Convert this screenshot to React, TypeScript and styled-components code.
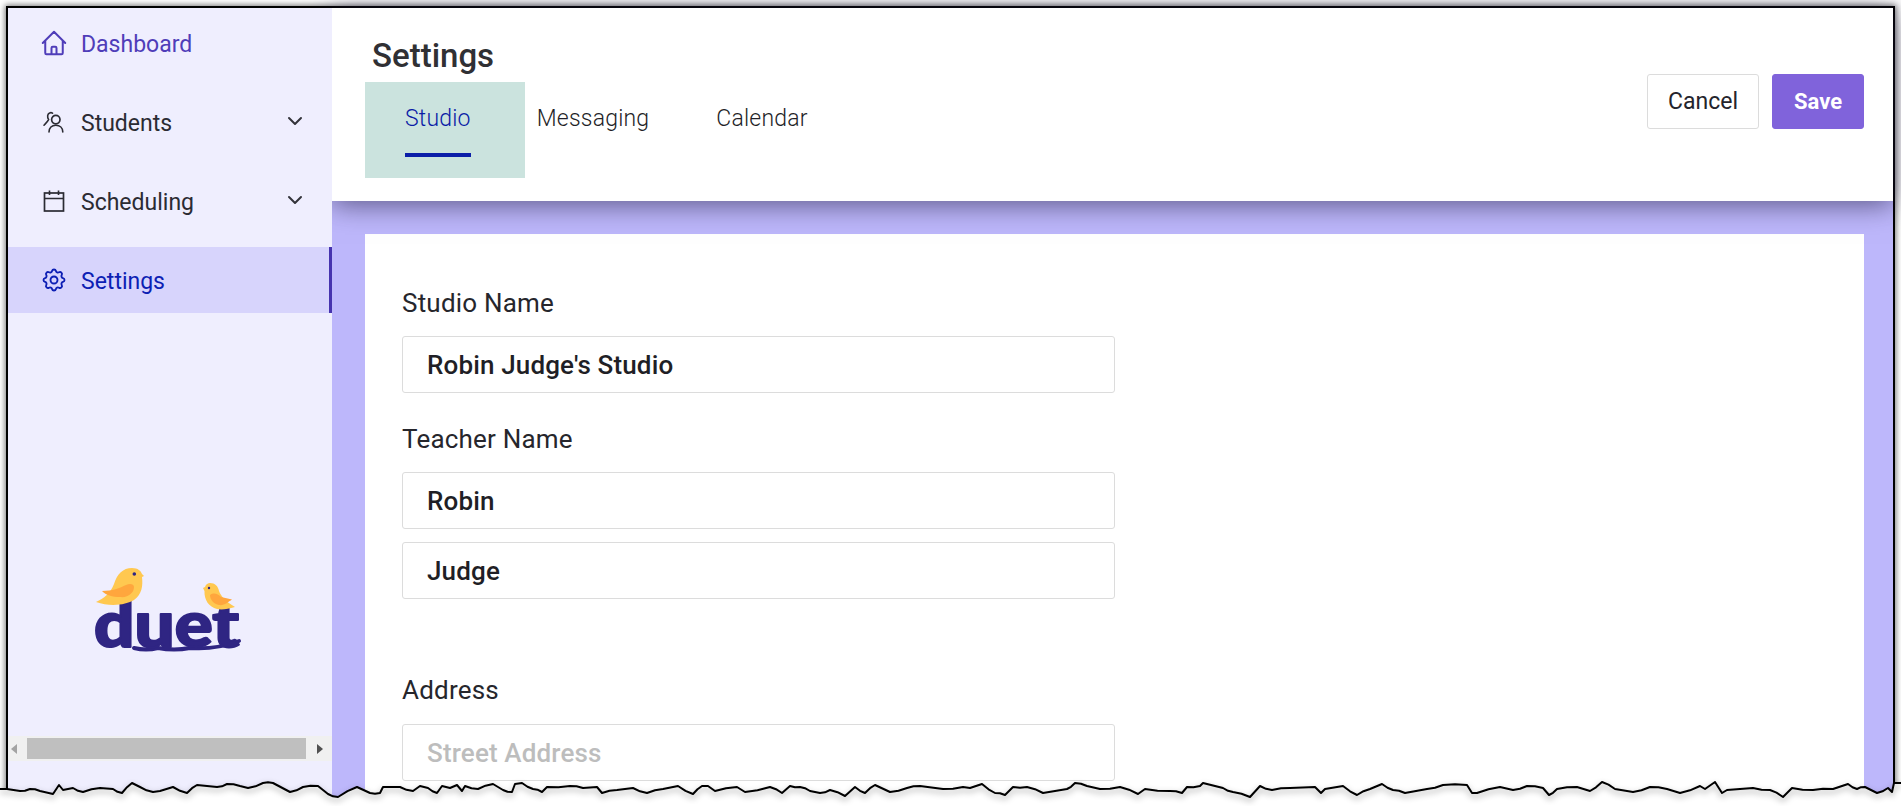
import React from 'react';
import styled, { createGlobalStyle } from 'styled-components';
import { HiOutlineHome, HiOutlineCog } from 'react-icons/hi';
import { ChevronDown } from 'lucide-react';

const Global = createGlobalStyle`
  html, body { margin: 0; padding: 0; background: #fff; height: 806px; overflow: hidden; }
  #root { height: 806px; }
  * { box-sizing: border-box; }
`;

const Page = styled.div`
  position: relative;
  width: 1901px;
  height: 806px;
  overflow: hidden;
  padding: 6px 6px 0;
  font-family: Roboto, "Liberation Sans", sans-serif;
  color: #2b2b33;
`;

const Frame = styled.div`
  display: flex;
  width: 1889px;
  height: 830px;
  border: 2px solid #000;
  box-shadow: 0 0 6px 1px rgba(0, 0, 0, 0.55);
`;

const Sidebar = styled.aside`
  position: relative;
  z-index: 2;
  flex: 0 0 324px;
  display: flex;
  flex-direction: column;
  background: #efeefe;
  padding-top: 2px;
`;

const Nav = styled.nav`
  display: flex;
  flex-direction: column;
  gap: 13px;
`;

const NavItem = styled.div<{ $tone: 'brand' | 'plain' | 'active' }>`
  height: 66px;
  display: flex;
  align-items: center;
  gap: 14px;
  padding: 0 25px 0 33px;
  font-size: 23px;
  color: ${p => (p.$tone === 'brand' ? '#4f3db9' : p.$tone === 'active' ? '#0d1fb4' : '#2b2b33')};
  background: ${p => (p.$tone === 'active' ? '#d7d4fc' : 'transparent')};
  border-right: ${p => (p.$tone === 'active' ? '3px solid #4633af' : '0')};
`;

const NavIcon = styled.span`
  width: 26px;
  height: 26px;
  display: flex;
  align-items: center;
  justify-content: center;
  svg { display: block; flex: none; }
  svg path { stroke-width: 1.6; }
`;

const NavLabel = styled.span`
  flex: 1;
  padding-top: 2px;
`;

const Chevron = styled(ChevronDown)`
  width: 24px;
  height: 24px;
  margin-top: -2px;
  color: #33333a;
`;

const LogoWrap = styled.div`
  margin: 247px 0 0 82px;
  height: 104px;
`;

const ScrollBar = styled.div`
  margin-top: 72px;
  height: 25px;
  display: flex;
  align-items: center;
  justify-content: space-between;
  background: #f0f0f0;
  padding: 0 9px 0 3px;
`;

const ScrollThumb = styled.div`
  width: 279px;
  height: 21px;
  margin-left: -1px;
  background: #bfbfbf;
`;

const Arrow = styled.span<{ $dir: 'left' | 'right' }>`
  width: 0;
  height: 0;
  border-top: 5px solid transparent;
  border-bottom: 5px solid transparent;
  ${p =>
    p.$dir === 'left'
      ? 'border-right: 6px solid #a3a3a3; margin-right: 10px;'
      : 'border-left: 6px solid #505050; margin-left: 10px;'}
`;

const Content = styled.div`
  flex: 1;
  display: flex;
  flex-direction: column;
  background: #bdb7fb;
  min-width: 0;
`;

const Header = styled.header`
  position: relative;
  z-index: 1;
  flex: 0 0 193px;
  background: #fff;
  display: flex;
  justify-content: space-between;
  padding: 0 29px 0 33px;
  box-shadow: 0 4px 26px rgba(30, 25, 60, 0.6);
`;

const HeaderLeft = styled.div`
  display: flex;
  flex-direction: column;
`;

const Title = styled.h1`
  margin: 0;
  padding: 28px 0 0 7px;
  height: 74px;
  font-size: 33px;
  line-height: 40px;
  font-weight: 500;
  color: #303034;
`;

const Tabs = styled.div`
  display: flex;
  align-items: stretch;
  height: 96px;
`;

const Tab = styled.div<{ $active?: boolean }>`
  font-size: 23px;
  font-weight: 300;
  letter-spacing: 0.2px;
  color: ${p => (p.$active ? '#0a1ca6' : '#1f1f28')};
  background: ${p => (p.$active ? '#cbe3de' : 'transparent')};
  padding: ${p => (p.$active ? '0 54px 0 40px' : '0')};
  margin-right: ${p => (p.$active ? '12px' : '67px')};
`;

const TabText = styled.div<{ $active?: boolean }>`
  height: 75px;
  padding-top: 24px;
  line-height: 26px;
  border-bottom: 4px solid ${p => (p.$active ? '#0b1ea8' : 'transparent')};
`;

const Actions = styled.div`
  display: flex;
  gap: 13px;
  padding-top: 66px;
`;

const Button = styled.button<{ $primary?: boolean }>`
  height: 55px;
  width: ${p => (p.$primary ? '92px' : '112px')};
  border-radius: 3px;
  border: 1px solid ${p => (p.$primary ? '#8063db' : '#dcdcdc')};
  background: ${p => (p.$primary ? '#8063db' : '#fff')};
  color: ${p => (p.$primary ? '#fff' : '#24242c')};
  font-family: inherit;
  font-size: ${p => (p.$primary ? '22px' : '23px')};
  font-weight: ${p => (p.$primary ? 700 : 400)};
  padding: 0;
`;

const Body = styled.main`
  flex: 1;
  padding: 33px 29px 0 33px;
`;

const Card = styled.section`
  height: 700px;
  background: #fff;
  padding: 54px 0 0 37px;
`;

const Label = styled.label<{ $gap?: number }>`
  display: block;
  margin-top: ${p => p.$gap ?? 0}px;
  height: 30px;
  line-height: 30px;
  font-size: 26px;
  letter-spacing: 0.2px;
  color: #26262c;
`;

const Field = styled.input<{ $gap: number }>`
  display: block;
  width: 713px;
  height: 57px;
  margin-top: ${p => p.$gap}px;
  padding: 0 24px;
  border: 1px solid #dcdcdc;
  border-radius: 3px;
  font-family: Roboto, sans-serif;
  font-size: 26px;
  font-weight: 500;
  letter-spacing: 0.15px;
  color: #1f1f26;
  background: #fff;
  outline: none;
  &::placeholder { color: #bdbdbd; opacity: 1; }
`;

const TornEdge = styled.svg`
  position: absolute;
  z-index: 5;
  left: 0;
  top: 0;
  pointer-events: none;
`;

const EdgeLine = styled.path`
  fill: none;
  stroke: #000;
  stroke-width: 2;
  stroke-linejoin: round;
  filter: drop-shadow(0 3px 3px rgba(0, 0, 0, 0.4));
`;

const rawEdge: [number, number][] = [
  [0,789],[7,789],[20,791],[30,789],[40,791],[53,794],[59,785],[63,790],[73,788],[83,792],[100,788],[113,789],[122,793],[132,783],[140,787],[153,792],[160,791],[173,787],[187,793],[197,785],[217,787],[227,784],[240,786],[248,788],[263,783],[273,783],[290,792],[303,787],[318,786],[328,794],[338,797],[357,787],[370,793],[380,793],[383,787],
  [400,787],[413,791],[420,786],[428,788],[437,793],[442,786],[450,788],[457,785],[462,791],[465,786],[478,789],[493,784],[503,790],[512,792],[515,784],[522,783],[533,789],[542,792],[547,787],[570,786],[583,788],[597,787],[602,793],[617,790],[633,788],[647,793],[663,789],[678,786],[693,794],[702,786],[708,786],[715,791],[737,787],[745,792],[770,787],[782,793],[790,786],
  [800,787],[810,791],[820,793],[830,790],[845,796],[855,787],[865,793],[875,785],[890,792],[907,788],[920,786],[943,789],[963,787],[970,788],[982,784],[995,793],[1005,795],[1013,787],[1027,787],[1043,793],[1067,789],[1075,783],[1087,786],[1100,789],[1120,787],[1138,794],[1145,789],[1170,791],[1182,793],[1187,787],
  [1200,786],[1203,783],[1223,788],[1233,792],[1250,797],[1260,786],[1272,790],[1290,788],[1315,787],[1321,793],[1325,789],[1343,786],[1357,795],[1370,789],[1382,784],[1393,790],[1405,793],[1427,789],[1443,785],[1467,785],[1472,793],[1477,793],
  [1500,787],[1513,790],[1527,786],[1543,788],[1549,795],[1557,789],[1577,787],[1590,791],[1602,782],[1615,789],[1633,792],[1650,787],[1667,789],[1680,793],[1700,786],[1705,789],[1715,782],[1722,793],[1727,790],[1753,788],[1770,790],[1783,797],[1792,788],[1813,790],[1833,789],[1848,784],[1857,789],[1865,787],[1877,793],[1888,788],[1892,792],[1894,783],[1901,783],
];

const edge = rawEdge.flatMap(([x, y], i) => {
  const next = rawEdge[i + 1];
  if (!next || next[0] - x < 8) return [[x, y]];
  const jitter = ((i * 7) % 3) - 1;
  return [[x, y], [(x + next[0]) / 2, (y + next[1]) / 2 + jitter * 0.8]];
});
const edgeD = 'M' + edge.map(p => p.join(',')).join(' L');

function Logo() {
  return (
    <svg width="160" height="104" viewBox="0 0 160 104" overflow="visible" aria-label="duet logo">
      <path d="M44 88 Q56 91 68 88 Q84 91 100 88 Q125 90 149 81" fill="none" stroke="#2f2583" strokeWidth="4" strokeLinecap="round" />
      <text
        x="4"
        y="87"
        fontFamily="Lato, sans-serif"
        fontWeight="900"
        fontSize="62"
        textLength="145"
        lengthAdjust="spacingAndGlyphs"
        fill="#2f2583"
        stroke="#2f2583"
        strokeWidth="2"
        strokeLinejoin="round"
      >
        duet
      </text>
      <path d="M6 42C14 38 20 34 24 24C27 14 33 8 42 8C48 8 51 11 52 14L54 16L52 17C53 26 52 34 44 40C36 45 20 47 6 42Z" fill="#ffc850" />
      <path d="M12 31C22 31 30 28 36 25C40 23 44 24 44 27C44 33 38 38 30 37C22 37 16 35 12 31Z" fill="#ffa63d" />
      <circle cx="44.3" cy="14" r="1.8" fill="#2f2583" />
      <path d="M113 28L115 27C116 24 118 23 120 23C125 23 128 26 129 31C131 36 135 41 145 47C138 49 132 50 127 49C119 47 114 40 114.5 31Z" fill="#ffc850" />
      <path d="M120 35C124 32 128 34 131 37L142 39.5C138 42 134 46 129 45C124 44 120 40 120 35Z" fill="#ffa63d" />
      <circle cx="119" cy="28" r="1.2" fill="#2f2583" />
    </svg>
  );
}

function StudentsIcon() {
  return (
    <svg width="24" height="24" viewBox="0 0 24 24" fill="none" stroke="currentColor" strokeWidth="1.7" strokeLinecap="round">
      <circle cx="13.8" cy="9.6" r="4.2" />
      <path d="M7 22c0-4.2 2.8-6.8 6.8-6.8s7 2.6 7 6.8" />
      <path d="M10.5 3.2C9.6 2.6 8.6 2.5 7.6 3 5.4 4 5 6.8 6.6 9.6 5 12.5 3.6 13.5 2 15.2" />
    </svg>
  );
}

function CalendarIcon() {
  return (
    <svg width="24" height="24" viewBox="0 0 24 24" fill="none" stroke="currentColor" strokeWidth="1.7">
      <rect x="2.5" y="4" width="19" height="18" />
      <path d="M2.5 9.5h19M7.5 1.5V6M16.5 1.5V6" />
    </svg>
  );
}

export default function App() {
  return (
    <Page>
      <Global />
      <Frame>
        <Sidebar>
          <Nav>
            <NavItem $tone="brand">
              <NavIcon><HiOutlineHome size={30} /></NavIcon>
              <NavLabel>Dashboard</NavLabel>
            </NavItem>
            <NavItem $tone="plain">
              <NavIcon><StudentsIcon /></NavIcon>
              <NavLabel>Students</NavLabel>
              <Chevron />
            </NavItem>
            <NavItem $tone="plain">
              <NavIcon><CalendarIcon /></NavIcon>
              <NavLabel>Scheduling</NavLabel>
              <Chevron />
            </NavItem>
            <NavItem $tone="active">
              <NavIcon><HiOutlineCog size={28} /></NavIcon>
              <NavLabel>Settings</NavLabel>
            </NavItem>
          </Nav>
          <LogoWrap><Logo /></LogoWrap>
          <ScrollBar>
            <Arrow $dir="left" />
            <ScrollThumb />
            <Arrow $dir="right" />
          </ScrollBar>
        </Sidebar>
        <Content>
          <Header>
            <HeaderLeft>
              <Title>Settings</Title>
              <Tabs>
                <Tab $active><TabText $active>Studio</TabText></Tab>
                <Tab><TabText>Messaging</TabText></Tab>
                <Tab><TabText>Calendar</TabText></Tab>
              </Tabs>
            </HeaderLeft>
            <Actions>
              <Button>Cancel</Button>
              <Button $primary>Save</Button>
            </Actions>
          </Header>
          <Body>
            <Card>
              <Label>Studio Name</Label>
              <Field $gap={18} defaultValue="Robin Judge's Studio" />
              <Label $gap={31}>Teacher Name</Label>
              <Field $gap={18} defaultValue="Robin" />
              <Field $gap={13} defaultValue="Judge" />
              <Label $gap={76}>Address</Label>
              <Field $gap={19} placeholder="Street Address" />
            </Card>
          </Body>
        </Content>
      </Frame>
      <TornEdge width="1901" height="806" viewBox="0 0 1901 806">
        <path d={edgeD + ' L1901,806 L0,806 Z'} fill="#fff" />
        <EdgeLine d={edgeD} />
      </TornEdge>
    </Page>
  );
}
